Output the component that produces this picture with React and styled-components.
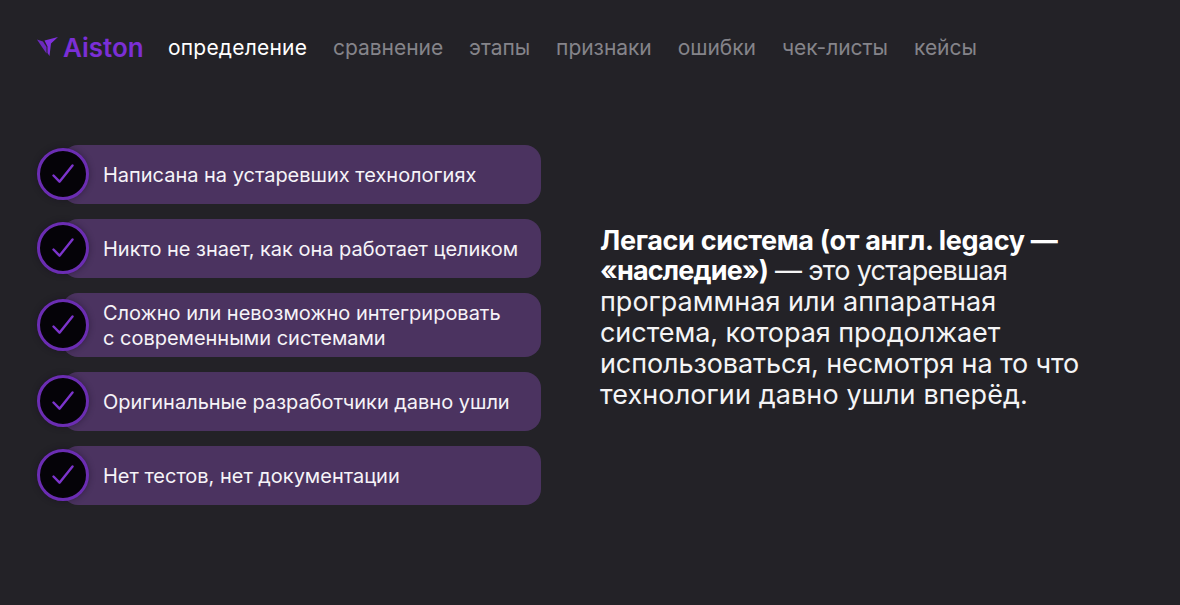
import React from "react";
import styled, { createGlobalStyle } from "styled-components";

const GlobalStyle = createGlobalStyle`
  html, body {
    margin: 0;
    padding: 0;
    background: #232227;
    font-family: Inter, "Noto Sans", sans-serif;
  }
`;

const Page = styled.div`
  width: 1180px;
  height: 605px;
  overflow: hidden;
  box-sizing: border-box;
  padding: 33px 37px 0;
  background: #232227;
  color: #fff;
`;

// ====== HEADER ======
const Header = styled.header`
  display: flex;
  align-items: center;
  height: 28px;
`;

const Logo = styled.div`
  display: flex;
  align-items: center;
  gap: 5px;
  width: 131px;
  color: #7b2fd6;
  font-size: 26px;
  font-weight: 600;
  letter-spacing: 0;
`;

const Nav = styled.nav`
  display: flex;
  gap: 26px;
`;

const NavItem = styled.a`
  font-size: 21px;
  letter-spacing: ${({ $active }) => ($active ? "0.2px" : "-0.05px")};
  color: ${({ $active }) => ($active ? "#ffffff" : "#85848a")};
`;

// ====== CONTENT ======
const Content = styled.main`
  display: flex;
  align-items: center;
  margin-top: 84px;
`;

const List = styled.ul`
  display: flex;
  flex-direction: column;
  gap: 15px;
  width: 504px;
  margin: 0;
  padding: 0;
  list-style: none;
`;

const Item = styled.li`
  display: flex;
  align-items: center;
`;

const Badge = styled.div`
  display: flex;
  align-items: center;
  justify-content: center;
  flex: none;
  z-index: 1;
  box-sizing: border-box;
  width: 52px;
  height: 52px;
  margin-bottom: 1px;
  border: 3px solid #6b2db3;
  border-radius: 50%;
  background: #050308;
  box-shadow: 0 0 6px rgba(20, 12, 30, 0.45);
`;

const Pill = styled.div`
  flex: 1;
  display: flex;
  align-items: center;
  box-sizing: border-box;
  min-height: 59px;
  margin-left: -27px;
  padding: 8px 12px 6px 41px;
  border-radius: 16px;
  background: #4b3360;
  font-size: 20px;
  line-height: 25px;
  letter-spacing: -0.02px;
  color: #f6f3f8;
`;

const Description = styled.p`
  width: 490px;
  margin: 0 0 14px 59px;
  font-size: 27px;
  line-height: 30.8px;
  color: #f4f4f5;

  & strong {
    font-weight: 700;
    color: #fff;
  }
`;

// tracking differs a little per line to keep the original line ends
const Line = styled.span`
  display: block;
  white-space: nowrap;
  letter-spacing: ${({ $tracking }) => $tracking}px;

  & strong {
    letter-spacing: ${({ $boldTracking }) => $boldTracking}px;
  }
`;

const CheckIcon = () => (
  <svg width="22" height="20" viewBox="0 0 22 20" fill="none">
    <path
      d="M1.5 11.5 L7.5 17.7 L20.5 1.5"
      stroke="#7c34cc"
      strokeWidth="2.4"
      strokeLinecap="round"
      strokeLinejoin="round"
    />
  </svg>
);

const BirdIcon = () => (
  <svg width="21" height="20" viewBox="0 0 21 20">
    <path d="M0 2.5 L6 4.5 L9.5 10 L9.5 16.5 L5 10 Z" fill="#6c29bd" />
    <path d="M7.5 3.5 L21 0 L14 6.5 L12.5 19 L10.5 16 L10.5 9.5 Z" fill="#7f30dc" />
  </svg>
);

const navItems = [
  "определение",
  "сравнение",
  "этапы",
  "признаки",
  "ошибки",
  "чек-листы",
  "кейсы",
];

const points = [
  ["Написана на устаревших технологиях"],
  ["Никто не знает, как она работает целиком"],
  ["Сложно или невозможно интегрировать", "с современными системами"],
  ["Оригинальные разработчики давно ушли"],
  ["Нет тестов, нет документации"],
];

export default function App() {
  return (
    <Page>
      <GlobalStyle />
      <Header>
        <Logo>
          <BirdIcon />
          Aiston
        </Logo>
        <Nav>
          {navItems.map((item, i) => (
            <NavItem key={item} $active={i === 0}>
              {item}
            </NavItem>
          ))}
        </Nav>
      </Header>

      <Content>
        <List>
          {points.map((lines) => (
            <Item key={lines[0]}>
              <Badge>
                <CheckIcon />
              </Badge>
              <Pill>
                <div>
                  {lines.map((line) => (
                    <div key={line}>{line}</div>
                  ))}
                </div>
              </Pill>
            </Item>
          ))}
        </List>
        <Description>
          <Line $tracking={0} $boldTracking={-0.33}>
            <strong>Легаси система (от англ. legacy —</strong>
          </Line>
          <Line $tracking={-0.7} $boldTracking={-0.85}>
            <strong>«наследие»)</strong> — это устаревшая
          </Line>
          <Line $tracking={0}>программная или аппаратная</Line>
          <Line $tracking={-0.05}>система, которая продолжает</Line>
          <Line $tracking={-0.1}>использоваться, несмотря на то что</Line>
          <Line $tracking={0.1}>технологии давно ушли вперёд.</Line>
        </Description>
      </Content>
    </Page>
  );
}
